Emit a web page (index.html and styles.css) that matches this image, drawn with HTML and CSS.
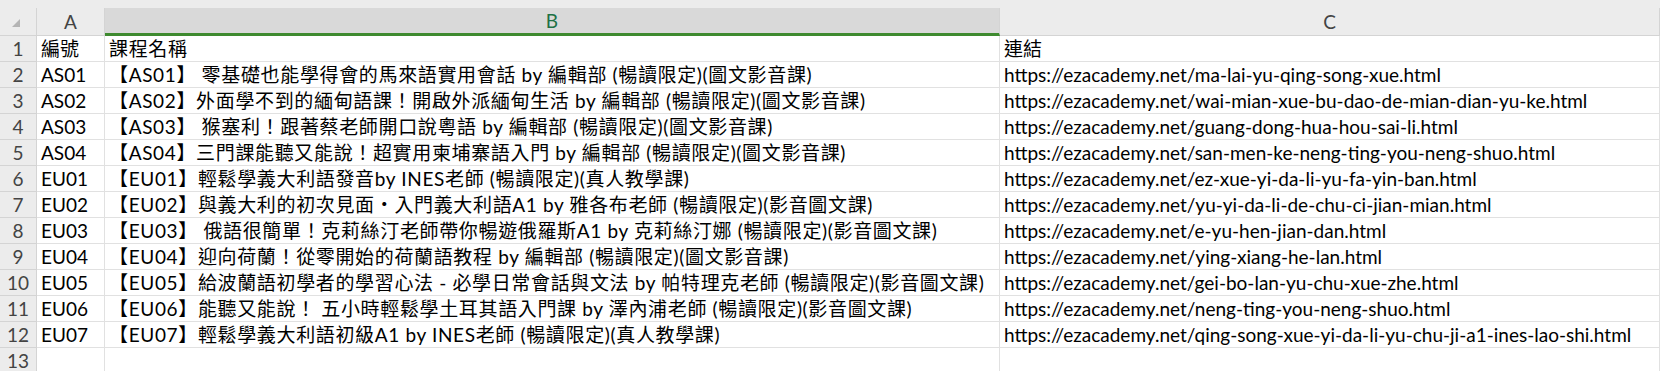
FILE: index.html
```html
<!DOCTYPE html>
<html lang="zh-Hant">
<head>
    <meta charset="UTF-8">
    <title>課程清單</title>
    <link rel="stylesheet" href="styles.css">
</head>
<body>

    <!-- top strip above the column letters -->
    <div class="topbar"></div>

    <div class="sheet">
        <!-- column headers -->
        <div class="corner">
            <svg width="8" height="8" viewBox="0 0 8 8"><polygon points="0,8 8,8 8,0" fill="#b4b4b4"/></svg>
        </div>
        <div class="colhead">A</div>
        <div class="colhead active">B</div>
        <div class="colhead">C</div>

        <div class="rowhead">1</div>
        <div class="cell">編號</div>
        <div class="cell name">課程名稱</div>
        <div class="cell">連結</div>

        <div class="rowhead">2</div>
        <div class="cell">AS01</div>
        <div class="cell name">【AS01】 零基礎也能學得會的馬來語實用會話 by 編輯部 (暢讀限定)(圖文影音課)</div>
        <div class="cell">https://ezacademy.net/ma-lai-yu-qing-song-xue.html</div>

        <div class="rowhead">3</div>
        <div class="cell">AS02</div>
        <div class="cell name">【AS02】外面學不到的緬甸語課！開啟外派緬甸生活 by 編輯部 (暢讀限定)(圖文影音課)</div>
        <div class="cell">https://ezacademy.net/wai-mian-xue-bu-dao-de-mian-dian-yu-ke.html</div>

        <div class="rowhead">4</div>
        <div class="cell">AS03</div>
        <div class="cell name">【AS03】 猴塞利！跟著蔡老師開口說粵語 by 編輯部 (暢讀限定)(圖文影音課)</div>
        <div class="cell">https://ezacademy.net/guang-dong-hua-hou-sai-li.html</div>

        <div class="rowhead">5</div>
        <div class="cell">AS04</div>
        <div class="cell name">【AS04】三門課能聽又能說！超實用柬埔寨語入門 by 編輯部 (暢讀限定)(圖文影音課)</div>
        <div class="cell">https://ezacademy.net/san-men-ke-neng-ting-you-neng-shuo.html</div>

        <div class="rowhead">6</div>
        <div class="cell">EU01</div>
        <div class="cell name">【EU01】輕鬆學義大利語發音by INES老師 (暢讀限定)(真人教學課)</div>
        <div class="cell">https://ezacademy.net/ez-xue-yi-da-li-yu-fa-yin-ban.html</div>

        <div class="rowhead">7</div>
        <div class="cell">EU02</div>
        <div class="cell name">【EU02】與義大利的初次見面・入門義大利語A1 by 雅各布老師 (暢讀限定)(影音圖文課)</div>
        <div class="cell">https://ezacademy.net/yu-yi-da-li-de-chu-ci-jian-mian.html</div>

        <div class="rowhead">8</div>
        <div class="cell">EU03</div>
        <div class="cell name">【EU03】 俄語很簡單！克莉絲汀老師帶你暢遊俄羅斯A1 by 克莉絲汀娜 (暢讀限定)(影音圖文課)</div>
        <div class="cell">https://ezacademy.net/e-yu-hen-jian-dan.html</div>

        <div class="rowhead">9</div>
        <div class="cell">EU04</div>
        <div class="cell name">【EU04】迎向荷蘭！從零開始的荷蘭語教程 by 編輯部 (暢讀限定)(圖文影音課)</div>
        <div class="cell">https://ezacademy.net/ying-xiang-he-lan.html</div>

        <div class="rowhead">10</div>
        <div class="cell">EU05</div>
        <div class="cell name">【EU05】給波蘭語初學者的學習心法 - 必學日常會話與文法 by 帕特理克老師 (暢讀限定)(影音圖文課)</div>
        <div class="cell">https://ezacademy.net/gei-bo-lan-yu-chu-xue-zhe.html</div>

        <div class="rowhead">11</div>
        <div class="cell">EU06</div>
        <div class="cell name">【EU06】能聽又能說！ 五小時輕鬆學土耳其語入門課 by 澤內浦老師 (暢讀限定)(影音圖文課)</div>
        <div class="cell">https://ezacademy.net/neng-ting-you-neng-shuo.html</div>

        <div class="rowhead">12</div>
        <div class="cell">EU07</div>
        <div class="cell name">【EU07】輕鬆學義大利語初級A1 by INES老師 (暢讀限定)(真人教學課)</div>
        <div class="cell">https://ezacademy.net/qing-song-xue-yi-da-li-yu-chu-ji-a1-ines-lao-shi.html</div>

        <div class="rowhead">13</div>
        <div class="cell"></div>
        <div class="cell name"></div>
        <div class="cell"></div>
    </div>

</body>
</html>
```

FILE: styles.css
```css
html, body {
    margin: 0;
    padding: 0;
    overflow: hidden;
    background-color: #fff;
}

body {
    font-family: "Lato", "Noto Sans CJK TC", sans-serif;
    font-size: 19px;
    color: #000;
}

.topbar {
    height: 8px;
    background-color: #ececec;
}

/* the grid of cells */
.sheet {
    display: grid;
    grid-template-columns: 37px 68px 895px 1fr;
    grid-template-rows: 28px;
    grid-auto-rows: 26px;
}

.sheet > div {
    box-sizing: border-box;
    white-space: nowrap;
    overflow: hidden;
}

.corner {
    background-color: #ececec;
    border-right: 1px solid #d4d4d4;
    border-bottom: 1px solid #d4d4d4;
    padding: 11px 0 0 12px;
}

.corner svg {
    display: block;
}

.colhead {
    background-color: #ececec;
    color: #444;
    text-align: center;
    line-height: 27px;
    border-right: 1px solid #d4d4d4;
    border-bottom: 1px solid #d4d4d4;
}

.colhead.active {
    background-color: #d9d9d9;
    color: #1e7145;
    border-bottom: 3px solid #3e8a2f;
    line-height: 25px;
}

.rowhead {
    background-color: #ececec;
    color: #444;
    text-align: center;
    line-height: 25px;
    border-right: 1px solid #d4d4d4;
    border-bottom: 1px solid #d4d4d4;
}

.cell {
    padding: 0 4px;
    line-height: 25px;
    border-right: 1px solid #e1e1e1;
    border-bottom: 1px solid #e1e1e1;
}

/* course names: the CJK text runs a bit wider in the sheet */
.cell.name {
    letter-spacing: 0.65px;
}
```
